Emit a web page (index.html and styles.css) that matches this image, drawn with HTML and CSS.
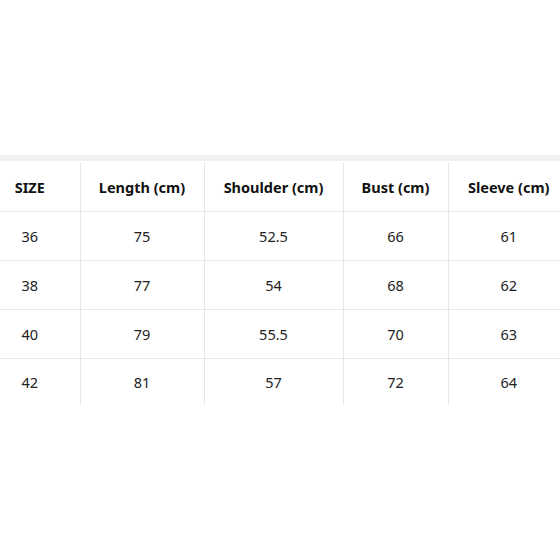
FILE: index.html
```html
<!DOCTYPE html>
<html>
<head>
<meta charset="utf-8">
<link rel="stylesheet" href="styles.css">
</head>
<body>
<div class="page">
  <div class="band"></div>
  <table class="sizes">
    <colgroup>
      <col class="c1"><col class="c2"><col class="c3"><col class="c4"><col class="c5">
    </colgroup>
    <thead>
      <tr><th>SIZE</th><th>Length (cm)</th><th>Shoulder (cm)</th><th>Bust (cm)</th><th>Sleeve (cm)</th></tr>
    </thead>
    <tbody>
      <tr><td>36</td><td>75</td><td>52.5</td><td>66</td><td>61</td></tr>
      <tr><td>38</td><td>77</td><td>54</td><td>68</td><td>62</td></tr>
      <tr><td>40</td><td>79</td><td>55.5</td><td>70</td><td>63</td></tr>
      <tr><td>42</td><td>81</td><td>57</td><td>72</td><td>64</td></tr>
    </tbody>
  </table>
</div>
</body>
</html>
```
FILE: styles.css
```css
html, body {
  margin: 0;
  padding: 0;
  background: #fff;
  overflow: hidden;
}
.page {
  padding-top: 155px;
  width: 560px;
  overflow: hidden;
}
.band {
  height: 6px;
  background: #f2f2f2;
  margin-bottom: 1px;
}
.sizes {
  border-collapse: collapse;
  table-layout: fixed;
  width: 589px;
  margin-left: -20px;
  font-family: "Noto Sans", "Open Sans", sans-serif;
  font-size: 14.5px;
  color: #222;
}
.c1 { width: 100px; }
.c2 { width: 124px; }
.c3 { width: 139px; }
.c4 { width: 105px; }
.c5 { width: 121px; }
.sizes th, .sizes td {
  height: 48px;
  padding: 0;
  text-align: center;
  vertical-align: middle;
  border-right: 1px solid #e6e6e6;
  border-bottom: 1px solid #e6e6e6;
  white-space: nowrap;
}
.sizes th {
  height: 49px;
  font-weight: 700;
  color: #111;
}
.sizes th:last-child, .sizes td:last-child {
  border-right: none;
}
.sizes tbody tr:last-child td {
  border-bottom: none;
  height: 46px;
}
```
